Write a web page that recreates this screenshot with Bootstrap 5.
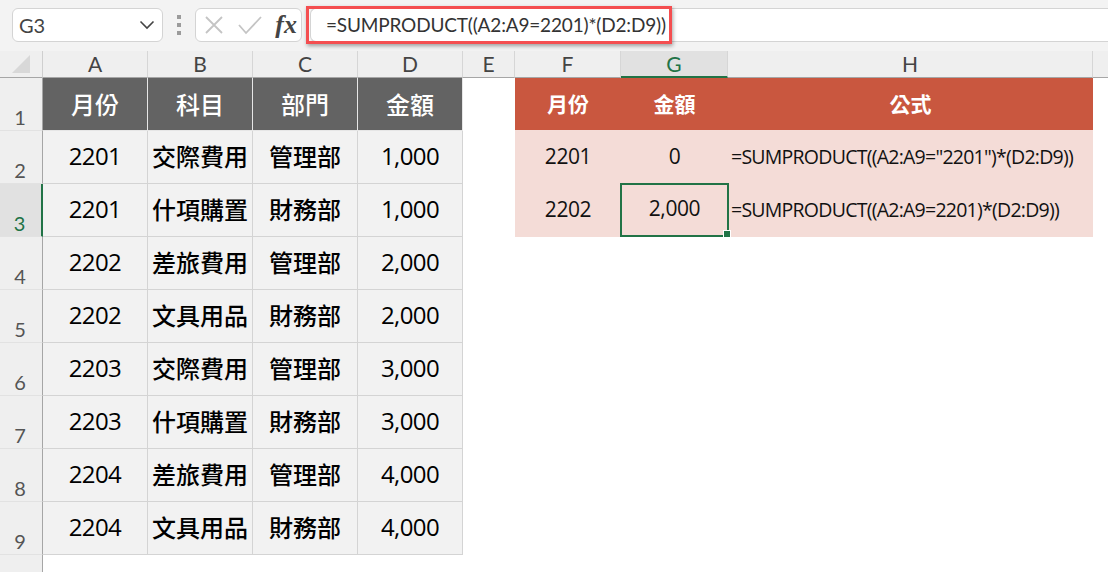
<!DOCTYPE html>
<html lang="zh-Hant">
<head>
<meta charset="utf-8">
<title>SUMPRODUCT</title>
<link rel="stylesheet" href="https://cdn.jsdelivr.net/npm/bootstrap@5.3.0/dist/css/bootstrap.min.css">
<style>
html,body{margin:0;height:572px;overflow:hidden;background:#fff}
.xl-top{height:51px;background:#f3f3f3;padding:8px 0 9px 12px;font-family:"Lato","Noto Sans CJK TC",sans-serif}
.xl-name{width:151px;height:34px;background:#fff;border:1px solid #d4d4d4;border-radius:6px;padding:0 7px 0 6px;font-size:20px;color:#444}
.xl-dots{width:32px}
.xl-dots i{display:block;width:4px;height:4px;background:#9b9b9b;margin:2px 0}
.xl-fn{width:107px;height:34px;background:#fff;border:1px solid #d4d4d4;border-radius:6px;padding:0 4px 0 8px}
.xl-fx{font-family:"Liberation Serif",serif;font-style:italic;font-weight:700;font-size:26px;color:#444;line-height:1}
.xl-input{margin-left:8px;flex:1;height:34px;background:#fff;border:1px solid #d4d4d4;border-right:0;border-radius:6px 0 0 6px;padding-left:15px;font-size:19px;color:#333;letter-spacing:-.17px}
.xl-mark{position:absolute;left:306px;top:6px;width:366px;height:38px;border:3px solid #f44e50;box-shadow:1px 2px 4px rgba(0,0,0,.35);pointer-events:none}
.xl-sheet{display:grid;grid-template-columns:43px 105px 105px 105px 105px 52px 106px 107px 365px 1fr;grid-template-rows:27px repeat(9,53px) 17px;font-family:"Noto Sans CJK TC",sans-serif}
.xl-sheet>div{display:flex;align-items:center;justify-content:center}
.xl-corner{background:#efefef;border-bottom:1px solid #a6a6a6;border-right:1px solid #cfcfcf}
.xl-col{background:#efefef;border-bottom:1px solid #a6a6a6;border-right:1px solid #d6d6d6;font-family:"Lato",sans-serif;font-size:21px;color:#444}
.xl-col.xl-active{background:#e1e1e1;border-bottom:2px solid #217346;color:#217346}
.xl-sheet>.xl-rowh{background:#efefef;border-right:1px solid #a6a6a6;border-bottom:1px solid #e2e2e2;align-items:flex-end;font-family:"Lato",sans-serif;font-size:20px;color:#555;padding:0 2px 1px 0;line-height:24px}
.xl-sheet>.xl-rowh.xl-active{color:#217346;background:#e1e1e1;border-right:2px solid #217346}
.xl-head{background:#636363;color:#fff;border-right:1px solid #e6e6e6;border-bottom:1px solid #e6e6e6;font-size:24px;font-weight:500}
.xl-cell{background:#f2f2f2;color:#000;border-right:1px solid #d4d4d4;border-bottom:1px solid #d4d4d4;font-size:24px;font-weight:500;white-space:nowrap;overflow:hidden;padding-bottom:2px}
.xl-num{font-family:"Open Sans","Noto Sans CJK TC",sans-serif;font-size:24px;font-weight:500;letter-spacing:-.6px}
.xl-phead{background:#c9573f;color:#fff;border-bottom:1px solid #f4dcd7;font-size:21px;font-weight:700}
.xl-pcell{background:#f4dcd7;color:#111;font-family:"Open Sans",sans-serif;font-size:21px;font-weight:500;letter-spacing:-.4px;white-space:nowrap;padding-bottom:2px}
.xl-sheet>.xl-formula{justify-content:flex-start;padding-left:3px;font-size:19.500px;letter-spacing:-.75px}
.xl-sel{position:relative;box-shadow:inset 0 0 0 2px #217346;margin:-1px -1px 0 -1px}
.xl-grip{position:absolute;right:-2px;bottom:-1px;width:6px;height:6px;background:#217346;border:1px solid #fff;box-sizing:content-box}
</style>
</head>
<body class="position-relative">
<div class="xl-top d-flex align-items-center">
  <div class="xl-name d-flex align-items-center justify-content-between"><span>G3</span>
    <svg width="16" height="10" viewBox="0 0 16 10"><path d="M1.500 1.500 8 8l6.500-6.500" fill="none" stroke="#444" stroke-width="1.600"/></svg></div>
  <div class="xl-dots d-flex flex-column align-items-center"><i></i><i></i><i></i></div>
  <div class="xl-fn d-flex align-items-center justify-content-between">
    <svg width="20" height="20" viewBox="0 0 20 20"><path d="M2 2l16 16M18 2 2 18" stroke="#c4c4c4" stroke-width="1.800" fill="none"/></svg>
    <svg width="26" height="20" viewBox="0 0 26 20"><path d="M2 10l7 8L24 2" stroke="#c4c4c4" stroke-width="1.800" fill="none"/></svg>
    <span class="xl-fx">fx</span>
  </div>
  <div class="xl-input d-flex align-items-center">=SUMPRODUCT((A2:A9=2201)*(D2:D9))</div>
</div>
<div class="xl-mark"></div>
<div class="xl-sheet">
  <div class="xl-corner"><svg width="18" height="18" viewBox="0 0 18 18"><path d="M18 0v18H0z" fill="#d8d8d8"/></svg></div>
  <div class="xl-col">A</div><div class="xl-col">B</div><div class="xl-col">C</div><div class="xl-col">D</div><div class="xl-col">E</div><div class="xl-col">F</div><div class="xl-col xl-active">G</div><div class="xl-col">H</div><div class="xl-col border-end-0"></div>

  <div class="xl-rowh">1</div><div class="xl-head">月份</div><div class="xl-head">科目</div><div class="xl-head">部門</div><div class="xl-head">金額</div><div></div><div class="xl-phead">月份</div><div class="xl-phead">金額</div><div class="xl-phead">公式</div><div></div>

  <div class="xl-rowh">2</div><div class="xl-cell xl-num">2201</div><div class="xl-cell">交際費用</div><div class="xl-cell">管理部</div><div class="xl-cell xl-num">1,000</div><div></div><div class="xl-pcell">2201</div><div class="xl-pcell">0</div><div class="xl-pcell xl-formula">=SUMPRODUCT((A2:A9="2201")*(D2:D9))</div><div></div>

  <div class="xl-rowh xl-active">3</div><div class="xl-cell xl-num">2201</div><div class="xl-cell">什項購置</div><div class="xl-cell">財務部</div><div class="xl-cell xl-num">1,000</div><div></div><div class="xl-pcell">2202</div><div class="xl-pcell xl-sel">2,000<span class="xl-grip"></span></div><div class="xl-pcell xl-formula">=SUMPRODUCT((A2:A9=2201)*(D2:D9))</div><div></div>

  <div class="xl-rowh">4</div><div class="xl-cell xl-num">2202</div><div class="xl-cell">差旅費用</div><div class="xl-cell">管理部</div><div class="xl-cell xl-num">2,000</div><div></div><div></div><div></div><div></div><div></div>
  <div class="xl-rowh">5</div><div class="xl-cell xl-num">2202</div><div class="xl-cell">文具用品</div><div class="xl-cell">財務部</div><div class="xl-cell xl-num">2,000</div><div></div><div></div><div></div><div></div><div></div>
  <div class="xl-rowh">6</div><div class="xl-cell xl-num">2203</div><div class="xl-cell">交際費用</div><div class="xl-cell">管理部</div><div class="xl-cell xl-num">3,000</div><div></div><div></div><div></div><div></div><div></div>
  <div class="xl-rowh">7</div><div class="xl-cell xl-num">2203</div><div class="xl-cell">什項購置</div><div class="xl-cell">財務部</div><div class="xl-cell xl-num">3,000</div><div></div><div></div><div></div><div></div><div></div>
  <div class="xl-rowh">8</div><div class="xl-cell xl-num">2204</div><div class="xl-cell">差旅費用</div><div class="xl-cell">管理部</div><div class="xl-cell xl-num">4,000</div><div></div><div></div><div></div><div></div><div></div>
  <div class="xl-rowh">9</div><div class="xl-cell xl-num">2204</div><div class="xl-cell">文具用品</div><div class="xl-cell">財務部</div><div class="xl-cell xl-num">4,000</div><div></div><div></div><div></div><div></div><div></div>
  <div class="xl-rowh border-bottom-0"></div>
</div>
<script src="https://cdn.jsdelivr.net/npm/bootstrap@5.3.0/dist/js/bootstrap.bundle.min.js"></script>
</body>
</html>
